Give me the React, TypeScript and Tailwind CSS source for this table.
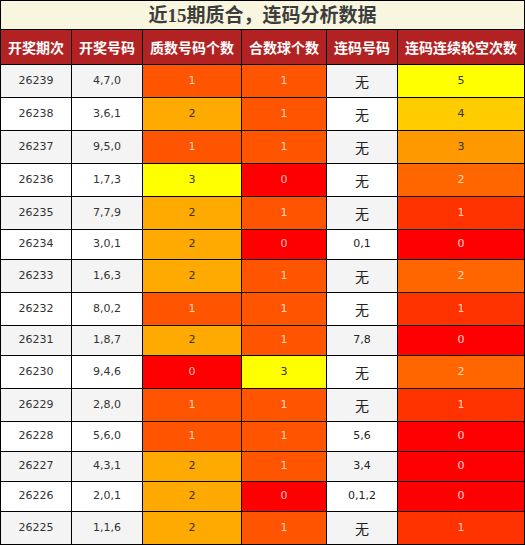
const rows: [string, string, number, number, string, number][] = [
  ["26239", "4,7,0", 1, 1, "无", 5],
  ["26238", "3,6,1", 2, 1, "无", 4],
  ["26237", "9,5,0", 1, 1, "无", 3],
  ["26236", "1,7,3", 3, 0, "无", 2],
  ["26235", "7,7,9", 2, 1, "无", 1],
  ["26234", "3,0,1", 2, 0, "0,1", 0],
  ["26233", "1,6,3", 2, 1, "无", 2],
  ["26232", "8,0,2", 1, 1, "无", 1],
  ["26231", "1,8,7", 2, 1, "7,8", 0],
  ["26230", "9,4,6", 0, 3, "无", 2],
  ["26229", "2,8,0", 1, 1, "无", 1],
  ["26228", "5,6,0", 1, 1, "5,6", 0],
  ["26227", "4,3,1", 2, 1, "3,4", 0],
  ["26226", "2,0,1", 2, 0, "0,1,2", 0],
  ["26225", "1,1,6", 2, 1, "无", 1],
];

// count colours for 质数 / 合数 columns
const countBg: Record<number, string> = {
  0: "bg-[#ff0000] text-white/75",
  1: "bg-[#ff5500] text-white/75",
  2: "bg-[#ffaa00] text-[#333]",
  3: "bg-[#ffff00] text-[#333]",
};

// 连码连续轮空次数 colours
const gapBg: Record<number, string> = {
  0: "bg-[#ff0000] text-white/80",
  1: "bg-[#ff3300] text-white/75",
  2: "bg-[#ff6600] text-white/75",
  3: "bg-[#ff9900] text-[#333]",
  4: "bg-[#ffcc00] text-[#333]",
  5: "bg-[#ffff00] text-[#333]",
};

const widths = ["w-[71px]", "w-[71px]", "w-[99px]", "w-[85px]", "w-[71px]", "w-[127px]"];
const heads = ["开奖期次", "开奖号码", "质数号码个数", "合数球个数", "连码号码", "连码连续轮空次数"];

const cell = "flex items-center justify-center border-r border-b border-black shrink-0";
const num = "font-['DejaVu_Sans','Noto_Sans_CJK_SC',sans-serif] text-[11px]";

export default function App() {
  return (
    <div className="w-[525px] border-l border-t border-black bg-white">
      <div className="h-[29px] flex items-center justify-center bg-[#f8f6de] border-r border-b border-black">
        <h1 className="font-['Liberation_Serif','Noto_Sans_CJK_SC',serif] font-bold text-[19px] text-[#3d3d3d] leading-none">
          近15期质合，连码分析数据
        </h1>
      </div>
      <div className="flex h-[35px] bg-[#b22222]">
        {heads.map((h, i) => (
          <div
            key={h}
            className={`${cell} ${widths[i]} text-white font-bold text-[14px] font-['Noto_Sans_CJK_SC',sans-serif]`}
          >
            {h}
          </div>
        ))}
      </div>
      {rows.map((r, idx) => {
        const tall = r[4] === "无";
        const base = idx % 2 === 0 ? "bg-[#f4f4f4]" : "bg-white";
        return (
          <div key={r[0]} className={`flex ${tall ? "h-[33px]" : "h-[30px]"}`}>
            <div className={`${cell} ${widths[0]} ${base} ${num} text-[#333]`}>{r[0]}</div>
            <div className={`${cell} ${widths[1]} ${base} ${num} text-[#333]`}>{r[1]}</div>
            <div className={`${cell} ${widths[2]} ${countBg[r[2]]} ${num}`}>{r[2]}</div>
            <div className={`${cell} ${widths[3]} ${countBg[r[3]]} ${num}`}>{r[3]}</div>
            <div
              className={`${cell} ${widths[4]} ${base} text-[#222] ${
                tall ? "font-['Noto_Sans_CJK_SC',sans-serif] text-[14px]" : num
              }`}
            >
              {r[4]}
            </div>
            <div className={`${cell} ${widths[5]} ${gapBg[r[5]]} ${num}`}>{r[5]}</div>
          </div>
        );
      })}
    </div>
  );
}
